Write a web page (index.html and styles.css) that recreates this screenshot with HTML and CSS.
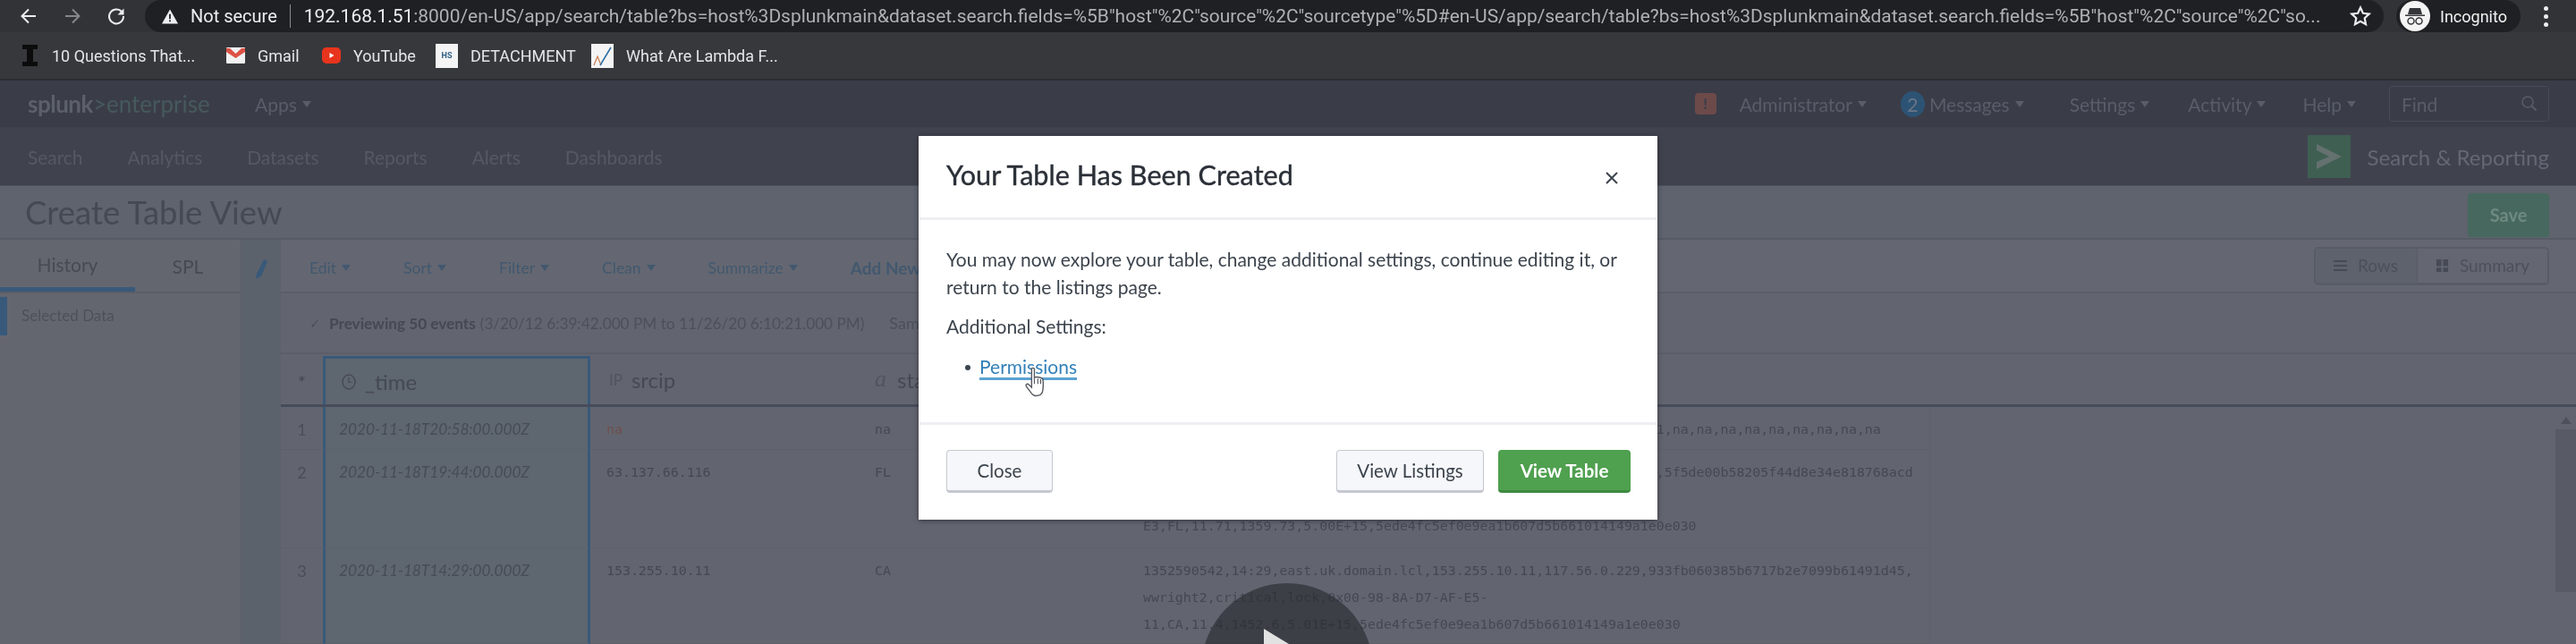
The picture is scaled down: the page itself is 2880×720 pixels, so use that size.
FILE: index.html
```html
<!DOCTYPE html>
<html lang="en">
<head>
  <meta charset="UTF-8">
  <title>Create Table View</title>
  <link rel="stylesheet" href="styles.css">
</head>
<body>
<div class="page">

  <div class="chrome-top">
    <div class="chrome-nav">
      <svg class="nav-icon" viewBox="0 0 22 22"><path d="M19 11H4M11 3.500 3.500 11l7.500 7.500" fill="none" stroke="#eceef0" stroke-width="2"/></svg>
      <svg class="nav-icon" viewBox="0 0 22 22"><path d="M3 11h15M11 3.500l7.500 7.500-7.500 7.500" fill="none" stroke="#85878b" stroke-width="2"/></svg>
      <svg class="nav-icon" viewBox="0 0 22 22"><path d="M18 7.500A8 8 0 1 0 19 11" fill="none" stroke="#eceef0" stroke-width="2"/><path d="M19.500 2.500v7h-7z" fill="#eceef0"/></svg>
    </div>
    <div class="address">
      <svg class="warn-icon" viewBox="0 0 20 18"><path d="M10 0l10 18H0z" fill="#eceef0"/><path d="M9 6h2v6H9zM9 13.500h2v2H9z" fill="#1f2023"/></svg>
      <span class="secure">Not secure</span>
      <span class="url"><span class="url-host">192.168.1.51</span>:8000/en-US/app/search/table?bs=host%3Dsplunkmain&amp;dataset.search.fields=%5B"host"%2C"source"%2C"sourcetype"%5D#en-US/app/search/table?bs=host%3Dsplunkmain&amp;dataset.search.fields=%5B"host"%2C"source"%2C"so...</span>
      <svg class="star-icon" viewBox="0 0 24 24"><path d="M12 2.500l2.900 6.300 6.800.8-5 4.700 1.300 6.800-6-3.400-6 3.400 1.300-6.800-5-4.700 6.800-.8z" fill="none" stroke="#eceef0" stroke-width="2.200"/></svg>
    </div>
    <div class="profile">
      <svg class="avatar" viewBox="0 0 34 34"><circle cx="17" cy="17" r="17" fill="#f4f4f4"/><path d="M11 8h12l2 7H9z" fill="#35363a"/><path d="M6 15.500h22v1.500H6z" fill="#35363a"/><circle cx="12.500" cy="22.500" r="3.500" fill="none" stroke="#35363a" stroke-width="1.500"/><circle cx="21.500" cy="22.500" r="3.500" fill="none" stroke="#35363a" stroke-width="1.500"/></svg>
      <span>Incognito</span>
    </div>
    <div class="chrome-menu"><i></i><i></i><i></i></div>
  </div>

  <div class="bookmarks">
    <div class="bookmark bm-first"><svg class="bm-icon-i" viewBox="0 0 17 24"><path d="M0 0h17v5h-5v14h5v5H0v-5h5V5H0z" fill="#0c0c0c"/></svg><span>10 Questions That...</span></div>
    <div class="bookmark bm-gmail"><svg class="bm-icon" viewBox="0 0 21 20"><rect y="1" width="21" height="18" rx="1" fill="#f1f1f1"/><path d="M0 2h4l6.500 6L17 2h4v4l-10.500 7L0 6z" fill="#dd5044"/></svg><span>Gmail</span></div>
    <div class="bookmark bm-youtube"><svg class="bm-icon" viewBox="0 0 21 20"><rect y="1" width="21" height="18" rx="5" fill="#e8341c"/><path d="M8.500 7l5 3-5 3z" fill="#fff"/></svg><span>YouTube</span></div>
    <div class="bookmark bm-hs"><span class="hs-icon">HS</span><span>DETACHMENT</span></div>
    <div class="bookmark bm-lambda"><svg class="bm-tile" viewBox="0 0 25 27"><rect width="25" height="27" fill="#f4f4f4"/><path d="M3 24l4-10 4 10" fill="none" stroke="#c97a4a" stroke-width="1.200"/><path d="M10 24l12-20" fill="none" stroke="#2e6da4" stroke-width="1.500"/></svg><span>What Are Lambda F...</span></div>
  </div>

  <div class="splunk-bar">
    <div class="splunk-logo">splunk<span class="logo-rest">&gt;enterprise</span></div>
    <div class="bar-link apps-link">Apps<span class="caret"></span></div>
    <div class="splunk-right">
      <span class="alert-badge">!</span>
      <div class="bar-link admin-link">Administrator<span class="caret"></span></div>
      <span class="count-badge">2</span>
      <div class="bar-link messages-link">Messages<span class="caret"></span></div>
      <div class="bar-link settings-link">Settings<span class="caret"></span></div>
      <div class="bar-link activity-link">Activity<span class="caret"></span></div>
      <div class="bar-link help-link">Help<span class="caret"></span></div>
      <div class="find-box">
        <span>Find</span>
        <svg class="find-icon" viewBox="0 0 20 20"><circle cx="8" cy="8" r="6" fill="none" stroke="#595d69" stroke-width="1.500"/><path d="M12.500 12.500l5 5" stroke="#595d69" stroke-width="2"/></svg>
      </div>
    </div>
  </div>

  <div class="app-bar">
    <nav class="app-links">
      <span>Search</span>
      <span>Analytics</span>
      <span>Datasets</span>
      <span>Reports</span>
      <span>Alerts</span>
      <span>Dashboards</span>
    </nav>
    <div class="app-name">
      <svg class="app-logo" viewBox="0 0 48 48"><rect width="48" height="48" fill="#3f5f52"/><path d="M10 10l28 14-28 14v-8l14-6-14-7z" fill="#64716f"/></svg>
      <span>Search &amp; Reporting</span>
    </div>
  </div>

  <div class="title-bar">
    <h1>Create Table View</h1>
    <button class="save-btn">Save</button>
  </div>

  <div class="workspace">
    <aside class="sidebar">
      <div class="side-tabs">
        <span class="side-tab side-tab-on">History</span>
        <span class="side-tab">SPL</span>
      </div>
      <div class="side-row">Selected Data</div>
    </aside>

    <div class="pencil-col">
      <svg class="pencil" viewBox="0 0 15 24"><path d="M10 1l4 2-7 17-6 3 1-6z" fill="#38597a"/></svg>
    </div>

    <main class="main">
      <div class="toolbar">
        <span class="tool tool-edit">Edit<span class="caret caret-blue"></span></span>
        <span class="tool tool-sort">Sort<span class="caret caret-blue"></span></span>
        <span class="tool tool-filter">Filter<span class="caret caret-blue"></span></span>
        <span class="tool tool-clean">Clean<span class="caret caret-blue"></span></span>
        <span class="tool tool-summarize">Summarize<span class="caret caret-blue"></span></span>
        <span class="tool tool-add">Add New</span>
        <div class="view-toggle">
          <span class="toggle-item toggle-on">
            <svg class="toggle-icon" viewBox="0 0 15 12"><path d="M0 0h15v2H0zM0 5h15v2H0zM0 10h15v2H0z" fill="#464a56"/></svg>Rows</span>
          <span class="toggle-item">
            <svg class="toggle-icon" viewBox="0 0 14 15"><path d="M0 0h6v8H0zM8 0h6v8H8zM0 10h6v5H0zM8 10h6v5H8z" fill="#464a56"/></svg>Summary</span>
        </div>
      </div>

      <div class="preview">
        <span class="check">&#10003;</span>
        <b>Previewing 50 events</b>
        <span class="preview-range">(3/20/12 6:39:42.000 PM to 11/26/20 6:10:21.000 PM)</span>
        <span class="preview-sample">Sample</span>
      </div>

      <div class="table-head">
        <div class="th th-num">*</div>
        <div class="th th-time">
          <svg class="clock" viewBox="0 0 16 18"><ellipse cx="8" cy="9" rx="7" ry="8" fill="none" stroke="#454954" stroke-width="1.400"/><path d="M8 4v5.500h3" fill="none" stroke="#454954" stroke-width="1.200"/></svg>
          _time
        </div>
        <div class="th th-ip"><small>IP</small>srcip</div>
        <div class="th th-state"><em>a</em>state</div>
        <div class="th"></div>
      </div>

      <div class="table-body">
        <div class="rows">
          <div class="td td-num">1</div>
          <div class="td td-time">2020-11-18T20:58:00.000Z</div>
          <div class="td mono td-na">na</div>
          <div class="td mono">na</div>
          <div class="td mono td-raw">1352654280,20:58,west.us.domain.lcl,na,na,na,na,na,na,na,na,na,s1,na,na,na,na,na,na,na,na,na</div>
          <div class="td td-num">2</div>
          <div class="td td-time">2020-11-18T19:44:00.000Z</div>
          <div class="td mono">63.137.66.116</div>
          <div class="td mono">FL</div>
          <div class="td mono td-raw">1352590542,19:44,east.uk.domain.lcl,63.137.66.116,117.156.10.229,5f5de00b58205f44d8e34e818768acd<br>wwright2,critical,lock,0x00-98-8A-D7-AF-E5-<br>E3,FL,11.71,1359.73,5.00E+15,5ede4fc5ef0e9ea1b607d5b661014149a1e0e030</div>
          <div class="td td-num">3</div>
          <div class="td td-time">2020-11-18T14:29:00.000Z</div>
          <div class="td mono">153.255.10.11</div>
          <div class="td mono">CA</div>
          <div class="td mono td-raw">1352590542,14:29,east.uk.domain.lcl,153.255.10.11,117.56.0.229,933fb060385b6717b2e7099b61491d45,<br>wwright2,critical,lock,0x00-98-8A-D7-AF-E5-<br>11,CA,11.4,1452.6,5.01E+15,5ede4fc5ef0e9ea1b607d5b661014149a1e0e030</div>
        </div>
        <div class="scrollbar">
          <span class="scroll-arrow"></span>
          <span class="scroll-thumb"></span>
        </div>
      </div>
    </main>
  </div>

  <div class="play-button"><span class="play-arrow"></span></div>

  <div class="modal">
    <div class="modal-header">
      <h2>Your Table Has Been Created</h2>
      <svg class="modal-close" viewBox="0 0 16 16"><path d="M2 2l12 12M14 2L2 14" stroke="#3c444d" stroke-width="2"/></svg>
    </div>
    <div class="modal-body">
      <p class="modal-text">You may now explore your table, change additional settings, continue editing it, or return to the listings page.</p>
      <p class="modal-label">Additional Settings:</p>
      <ul class="modal-list">
        <li><a href="#">Permissions</a></li>
      </ul>
    </div>
    <div class="modal-footer">
      <button class="btn">Close</button>
      <div class="footer-right">
        <button class="btn btn-listings">View Listings</button>
        <button class="btn btn-green">View Table</button>
      </div>
    </div>
    <svg class="hand-cursor" viewBox="0 0 30 44"><path d="M9 4c0-3 4-3 4 0v12c2-2 11-1 12 2 1 2 1 12 0 17-1 5-5 7-10 7-4 0-6-3-8-6l-6-8c-1-3 2-4 4-2l4 4z" fill="#fff" stroke="#55585e" stroke-width="1.800"/><path d="M13 17v8M18 17v8M22 18v7" stroke="#55585e" stroke-width="1.500"/></svg>
  </div>

</div>
</body>
</html>
```

FILE: styles.css
```css
* {
  margin: 0;
  padding: 0;
  box-sizing: border-box;
}

html, body {
  width: 2880px;
  height: 720px;
  overflow: hidden;
  background-color: #62656f;
}

button {
  font: inherit;
}

/* whole page is slightly soft, it comes from a video frame */
.page {
  position: relative;
  display: flex;
  flex-direction: column;
  width: 2880px;
  height: 720px;
  overflow: hidden;
  font-family: 'Lato', sans-serif;
  color: #454954;
  background-color: #62656f;
  filter: blur(0.6px);
}

/* browser chrome */
.chrome-top {
  flex: 0 0 36px;
  display: flex;
  align-items: center;
  background-color: #323336;
  font-family: 'Roboto', sans-serif;
}

.chrome-nav {
  width: 162px;
  display: flex;
  gap: 27px;
  padding-left: 21px;
}

.nav-icon {
  width: 22px;
  height: 22px;
}

.address {
  width: 2503px;
  height: 36px;
  display: flex;
  align-items: center;
  background-color: #1f2023;
  border-radius: 18px;
  padding-left: 19px;
  font-size: 20px;
  color: #eceef0;
  white-space: nowrap;
}

.warn-icon {
  width: 18px;
  height: 17px;
  margin-right: 14px;
}

.secure {
  padding-right: 14px;
  border-right: 1px solid #8a8c90;
  line-height: 26px;
  margin-right: 15px;
}

.url {
  width: 2270px;
  font-size: 20.95px;
  color: #aeb1b6;
}

.url-host {
  color: #eceef0;
}

.star-icon {
  width: 24px;
  height: 24px;
  margin-left: 17px;
}

.profile {
  margin-left: 14px;
  width: 139px;
  height: 36px;
  display: flex;
  align-items: center;
  gap: 11px;
  padding-left: 4px;
  background-color: #1f2023;
  border-radius: 18px;
  font-size: 18px;
  color: #f0f0f0;
}

.avatar {
  width: 34px;
  height: 34px;
}

.chrome-menu {
  margin-left: 26px;
  display: flex;
  flex-direction: column;
  gap: 4px;
}

.chrome-menu i {
  display: block;
  width: 5px;
  height: 5px;
  border-radius: 50%;
  background-color: #eceef0;
}

.bookmarks {
  flex: 0 0 54px;
  display: flex;
  align-items: center;
  padding-left: 25px;
  background-color: #37383b;
  border-bottom: 2px solid #2c2d32;
  font-family: 'Roboto', sans-serif;
  font-size: 18px;
  color: #e4e5e7;
  white-space: nowrap;
}

.bookmark {
  display: flex;
  align-items: center;
  gap: 14px;
}

.bm-first {
  gap: 16px;
  width: 228px;
}

.bm-gmail {
  width: 107px;
}

.bm-youtube {
  width: 127px;
}

.bm-hs {
  width: 174px;
}

.bm-icon-i {
  width: 17px;
  height: 24px;
}

.bm-icon {
  width: 21px;
  height: 20px;
}

.bm-tile {
  width: 25px;
  height: 27px;
}

.hs-icon {
  width: 25px;
  height: 27px;
  background-color: #f4f4f4;
  color: #2d5f86;
  font-size: 9px;
  font-weight: 700;
  line-height: 27px;
  text-align: center;
}

/* splunk top bar */
.splunk-bar {
  flex: 0 0 53px;
  display: flex;
  align-items: center;
  padding: 0 30px 0 31px;
  background-color: #3a3d48;
  color: #595d69;
  font-size: 21px;
  border-bottom: 1px solid #3f424d;
}

.splunk-logo {
  width: 254px;
  font-size: 26px;
  font-weight: 700;
  letter-spacing: -0.5px;
  color: #5c606b;
}

.logo-rest {
  font-weight: 400;
  color: #46595c;
  letter-spacing: 0;
}

.bar-link {
  display: flex;
  align-items: center;
  white-space: nowrap;
}

.caret {
  display: inline-block;
  margin-left: 6px;
  border-left: 5px solid transparent;
  border-right: 5px solid transparent;
  border-top: 7px solid #595d69;
}

.splunk-right {
  margin-left: auto;
  display: flex;
  align-items: center;
}

.alert-badge {
  width: 24px;
  height: 24px;
  margin-right: 26px;
  background-color: #6d4a4a;
  border-radius: 4px;
  color: #3a3d48;
  font-size: 17px;
  font-weight: 700;
  line-height: 24px;
  text-align: center;
}

.count-badge {
  width: 27px;
  height: 29px;
  margin-left: 38px;
  margin-right: 5px;
  background-color: #2d5374;
  border-radius: 50%;
  color: #6b7686;
  font-size: 21px;
  line-height: 29px;
  text-align: center;
}

.settings-link {
  margin-left: 51px;
}

.activity-link {
  margin-left: 43px;
}

.help-link {
  margin-left: 41px;
}

.find-box {
  width: 179px;
  height: 40px;
  margin-left: 37px;
  display: flex;
  align-items: center;
  justify-content: space-between;
  padding: 0 11px 0 13px;
  border: 1px solid #474b57;
  border-radius: 4px;
}

.find-icon {
  width: 20px;
  height: 20px;
}

/* app bar */
.app-bar {
  flex: 0 0 65px;
  display: flex;
  align-items: center;
  justify-content: space-between;
  padding: 0 30px 0 31px;
  background-color: #40434e;
  color: #555964;
  font-size: 20.9px;
  border-bottom: 1px solid #4d505b;
}

.app-links {
  display: flex;
  gap: 50px;
}

.app-name {
  display: flex;
  align-items: center;
  gap: 19px;
  font-size: 24px;
  color: #646874;
}

.app-logo {
  width: 48px;
  height: 48px;
}

/* title */
.title-bar {
  flex: 0 0 60px;
  display: flex;
  align-items: center;
  justify-content: space-between;
  padding: 0 30px 0 28px;
  background-color: #5e636d;
  border-bottom: 2px solid #575b66;
}

.title-bar h1 {
  font-size: 36.5px;
  font-weight: 400;
  color: #454954;
}

.save-btn {
  width: 91px;
  height: 49px;
  margin-top: 6px;
  border: none;
  border-radius: 4px;
  background-color: #47685e;
  color: #6f8a80;
  font-size: 20px;
  font-weight: 700;
}

/* page body */
.workspace {
  flex: 1;
  display: flex;
  min-height: 0;
}

.sidebar {
  width: 270px;
  background-color: #64666f;
  border-right: 1px solid #5b5e68;
}

.side-tabs {
  display: flex;
  height: 60px;
  border-bottom: 2px solid #5b5e68;
}

.side-tab {
  flex: 0 0 118px;
  display: flex;
  align-items: center;
  justify-content: center;
  font-size: 21px;
  color: #464a55;
}

.side-tab-on {
  flex: 0 0 151px;
  border-bottom: 5px solid #38597a;
  padding-top: 2px;
}

.side-row {
  height: 43px;
  margin-top: 4px;
  border-left: 8px solid #38597a;
  padding-left: 16px;
  line-height: 42px;
  font-size: 17px;
  color: #4d515c;
}

.pencil-col {
  width: 44px;
  display: flex;
  justify-content: center;
  padding-top: 21px;
  background-color: #5c626c;
}

.pencil {
  width: 15px;
  height: 24px;
}

.main {
  flex: 1;
  min-width: 0;
}

.toolbar {
  position: relative;
  height: 60px;
  display: flex;
  align-items: center;
  border-bottom: 2px solid #5b5e68;
  padding: 4px 0 0 32px;
  font-size: 17.5px;
  color: #42586f;
  background-color: #646771;
}

.tool {
  display: flex;
  align-items: center;
  white-space: nowrap;
}

.caret-blue {
  border-top-color: #42586f;
}

.tool-sort,
.tool-filter,
.tool-clean,
.tool-summarize,
.tool-add {
  margin-left: 59px;
}

.tool-add {
  font-size: 19px;
  font-weight: 700;
}

.view-toggle {
  margin-left: auto;
  margin-right: 30px;
  margin-top: -4px;
  display: flex;
  height: 43px;
  border: 2px solid #585c66;
  border-bottom-width: 3px;
  border-radius: 5px;
  font-size: 19px;
  color: #4c505c;
}

.toggle-item {
  display: flex;
  align-items: center;
  gap: 12px;
  padding: 0 20px;
}

.toggle-on {
  width: 114px;
  background-color: #5e626c;
  border-right: 1px solid #585c66;
}

.toggle-icon {
  width: 15px;
  height: 14px;
}

.preview {
  height: 68px;
  display: flex;
  align-items: center;
  padding-left: 32px;
  border-bottom: 2px solid #5b5e68;
  font-size: 17.2px;
  color: #4c505b;
  white-space: nowrap;
}

.check {
  width: 22px;
  font-size: 15px;
}

.preview b {
  margin-right: 5px;
  color: #454954;
}

.preview-sample {
  margin-left: 28px;
  font-size: 18px;
}

/* table */
.table-head {
  height: 59px;
  display: grid;
  grid-template-columns: 47px 299px 300px 300px 1fr;
  border-bottom: 3px solid #474c5a;
}

.th {
  display: flex;
  align-items: center;
  font-size: 24px;
  color: #454954;
  padding-left: 18px;
}

.th-num {
  justify-content: center;
  padding: 6px 0 0;
  font-size: 22px;
}

.th-time {
  gap: 10px;
  background-color: #5e6670;
  border: 3px solid #38597a;
  border-bottom: none;
  margin-top: 2px;
}

.clock {
  width: 16px;
  height: 18px;
}

.th-ip small {
  font-size: 17px;
  margin-right: 10px;
  color: #505460;
}

.th-ip {
  padding-left: 21px;
}

.th-state em {
  font-family: 'Liberation Serif', serif;
  font-size: 26px;
  margin-right: 12px;
  color: #505460;
}

.table-body {
  display: flex;
  height: 265px;
}

.rows {
  flex: 1;
  display: grid;
  grid-template-columns: 47px 299px 300px 300px 899px;
  grid-template-rows: 48px 110px 1fr;
  align-content: start;
}

.td {
  padding: 10px 0 0 18px;
  border-bottom: 1px solid #5e6069;
  line-height: 30px;
  white-space: nowrap;
}

.td-num {
  padding-left: 0;
  text-align: center;
  font-size: 18px;
  color: #4a4e59;
}

.td-time {
  border-left: 3px solid #38597a;
  border-right: 3px solid #38597a;
  background-color: #5e6670;
  border-bottom-color: #5b636d;
  padding-left: 15px;
  font-size: 17.2px;
  font-style: italic;
  color: #474c56;
}

.mono {
  font-family: 'DejaVu Sans Mono', monospace;
  font-size: 14.9px;
  color: #454852;
}

.td-na {
  color: #6f4f4c;
}

.td-raw {
  border-right: 1px solid #5f626b;
}

.scrollbar {
  width: 23px;
  display: flex;
  flex-direction: column;
  align-items: center;
  padding-top: 11px;
}

.scroll-arrow {
  border-left: 6px solid transparent;
  border-right: 6px solid transparent;
  border-bottom: 8px solid #4e515c;
  margin-bottom: 6px;
}

.scroll-thumb {
  width: 23px;
  height: 182px;
  background-color: #585a65;
}

/* video play button, see-through over the table */
.play-button {
  position: absolute;
  left: 1343px;
  top: 652px;
  width: 192px;
  height: 192px;
  border-radius: 50%;
  background-color: rgba(38, 40, 46, 0.62);
}

.play-arrow {
  position: absolute;
  left: 70px;
  top: 51px;
  border-top: 34px solid transparent;
  border-bottom: 34px solid transparent;
  border-left: 56px solid #e2e2e2;
}

/* dialog */
.modal {
  position: absolute;
  left: 1027px;
  top: 152px;
  width: 826px;
  height: 429px;
  display: flex;
  flex-direction: column;
  background-color: #ffffff;
  box-shadow: 0 1px 5px rgba(30, 32, 40, 0.7);
}

.modal-header {
  flex: 0 0 94px;
  display: flex;
  align-items: center;
  justify-content: space-between;
  padding: 0 43px 4px 31px;
  border-bottom: 3px solid #eeeff2;
}

.modal-header h2 {
  font-size: 30.6px;
  font-weight: 400;
  -webkit-text-stroke: 0.4px #2b3038;
  color: #2b3038;
}

.modal-close {
  width: 16px;
  height: 16px;
  margin-top: 6px;
}

.modal-body {
  flex: 1;
  padding: 28px 31px 0;
  font-size: 21px;
  line-height: 31px;
  color: #3c444d;
}

.modal-label {
  margin-top: 13px;
}

.modal-list {
  margin-top: 14px;
  padding-left: 37px;
  list-style: none;
  position: relative;
}

.modal-list li::before {
  content: "";
  position: absolute;
  left: 21px;
  top: 14px;
  width: 6px;
  height: 6px;
  border-radius: 50%;
  background-color: #3c444d;
}

.modal-list a {
  color: #3380b8;
  text-decoration: none;
  border-bottom: 3px solid #5ba2d4;
}

.modal-footer {
  flex: 0 0 109px;
  display: flex;
  align-items: flex-start;
  justify-content: space-between;
  padding: 28px 30px 0 31px;
  border-top: 3px solid #eeeff2;
}

.footer-right {
  display: flex;
  gap: 16px;
}

.btn {
  width: 119px;
  height: 48px;
  border: 1px solid #c6c8d0;
  border-bottom: 3px solid #c6c8d0;
  border-radius: 4px;
  background-color: #f6f7fa;
  color: #3c444d;
  font-family: 'Lato', sans-serif;
  font-size: 20.5px;
}

.btn-listings {
  width: 165px;
}

.btn-green {
  width: 148px;
  border: none;
  border-bottom: 3px solid #3e8a42;
  background-color: #4fa04f;
  color: #ffffff;
  font-weight: 700;
}

.hand-cursor {
  position: absolute;
  left: 118px;
  top: 258px;
  width: 26px;
  height: 34px;
}
```
